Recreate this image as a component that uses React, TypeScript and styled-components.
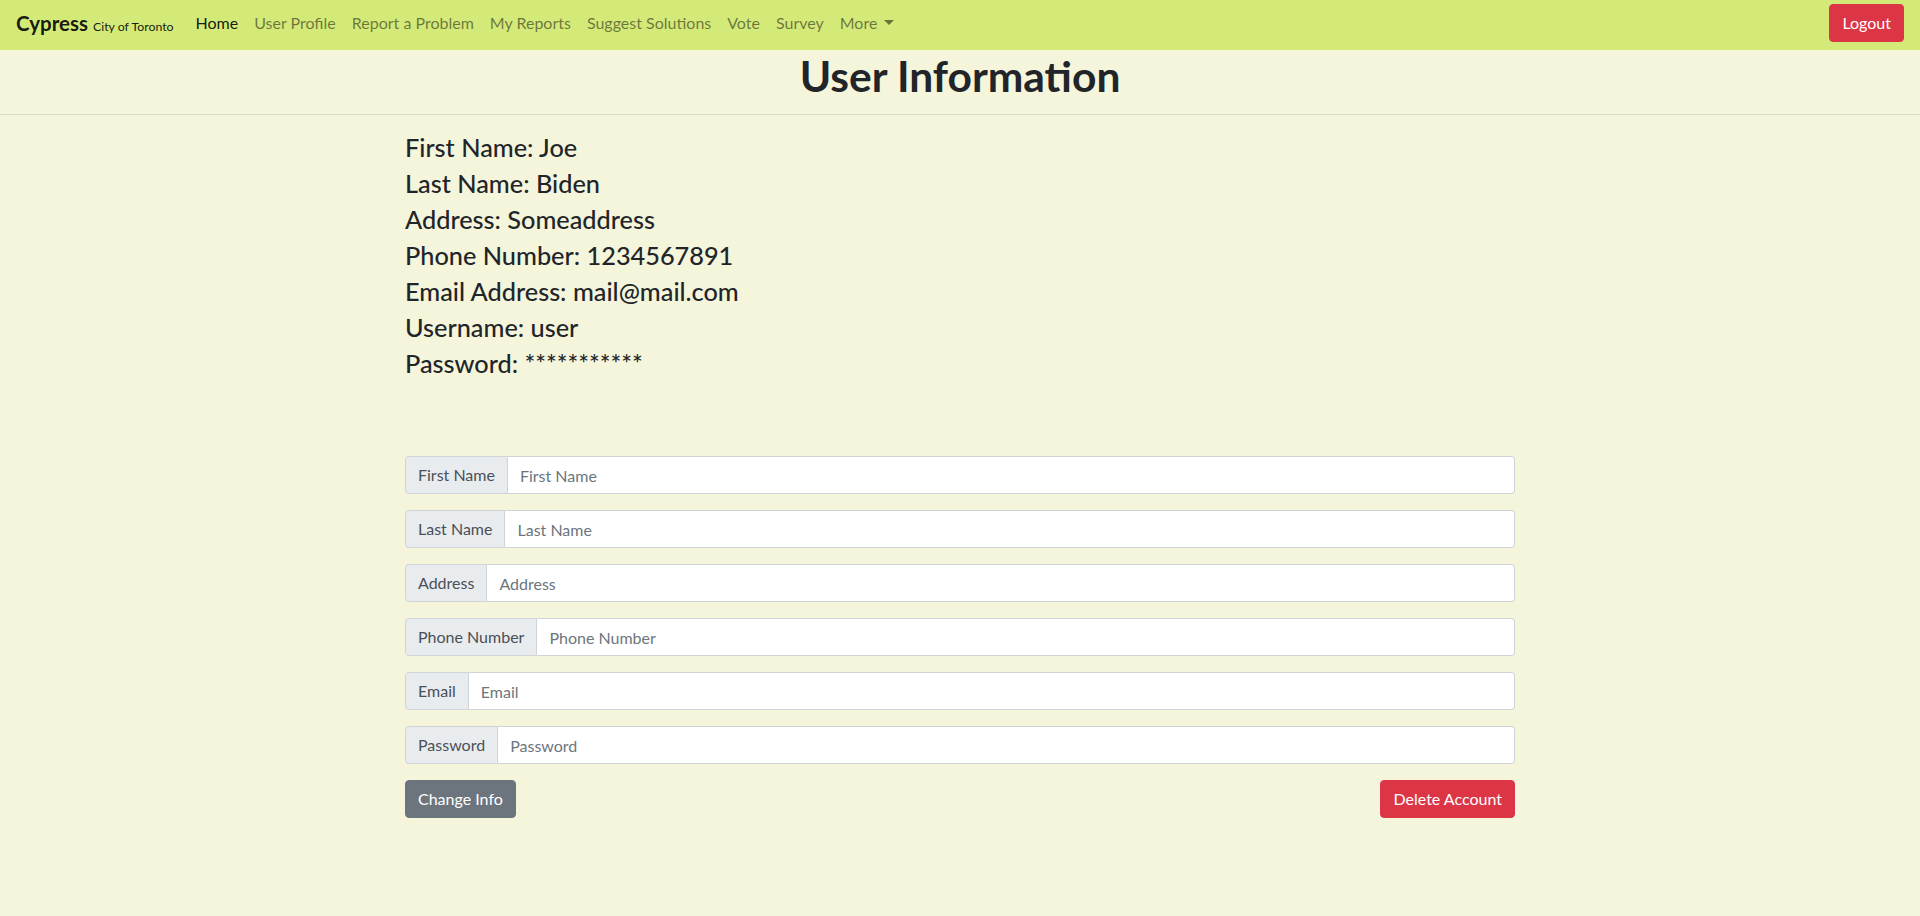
import React from "react";
import styled, { createGlobalStyle } from "styled-components";

const GlobalStyle = createGlobalStyle`
  html, body { margin: 0; padding: 0; }
  body {
    background: #f5f5dc;
    font-family: Lato, "Open Sans", "Liberation Sans", sans-serif;
    color: #212529;
    font-size: 16px;
    line-height: 1.5;
  }
  * { box-sizing: border-box; }
`;

const Navbar = styled.nav`
  height: 50px;
  background: #d4ea78;
  display: flex;
  align-items: center;
  padding: 0 16px 4px 16px;
`;

const Brand = styled.a`
  display: flex;
  align-items: baseline;
  gap: 5px;
  margin-right: 14px;
  color: rgba(0, 0, 0, 0.9);
  text-decoration: none;
  font-size: 20.5px;
  font-weight: 700;
  white-space: nowrap;
`;

const BrandSub = styled.small`
  font-size: 12.3px;
  font-weight: 400;
`;

const NavList = styled.ul`
  display: flex;
  list-style: none;
  margin: 0;
  padding: 0;
`;

const NavLink = styled.a<{ $active?: boolean }>`
  display: flex;
  align-items: center;
  padding: 8px 8px;
  font-size: 16px;
  color: ${(p) => (p.$active ? "rgba(0,0,0,0.9)" : "rgba(0,0,0,0.5)")};
  text-decoration: none;
  white-space: nowrap;
`;

const Caret = styled.span`
  display: inline-block;
  margin-left: 7px;
  border-top: 5px solid currentColor;
  border-left: 5px solid transparent;
  border-right: 5px solid transparent;
  transform: translateY(-1px);
`;

const Spacer = styled.div`
  flex: 1;
`;

const Button = styled.button<{ $variant: "danger" | "secondary" }>`
  height: 38px;
  padding: 6px 12px;
  font-family: inherit;
  font-size: 16px;
  line-height: 24px;
  color: #fff;
  border: 1px solid ${(p) => (p.$variant === "danger" ? "#dc3545" : "#6c757d")};
  background: ${(p) => (p.$variant === "danger" ? "#dc3545" : "#6c757d")};
  border-radius: 4px;
  cursor: pointer;
`;

const Header = styled.header`
  padding-top: 2px;
  text-align: center;
`;

const Title = styled.h1`
  margin: 0;
  font-size: 42.5px;
  font-weight: 700;
  line-height: 48px;
  color: #212529;
`;

const Divider = styled.hr`
  margin: 14px 0 0 0;
  border: 0;
  border-top: 1px solid rgba(0, 0, 0, 0.1);
`;

const Container = styled.main`
  width: 1110px;
  margin: 0 auto;
  padding-top: 17px;
`;

const InfoList = styled.div`
  display: flex;
  flex-direction: column;
  gap: 6px;
  margin-bottom: 78px;
`;

const InfoLine = styled.h4`
  margin: 0;
  font-size: 25.3px;
  font-weight: 500;
  line-height: 30px;
  color: #212529;
`;

const Form = styled.form`
  display: flex;
  flex-direction: column;
  gap: 16px;
`;

const InputGroup = styled.div`
  display: flex;
  height: 38px;
`;

const GroupLabel = styled.span`
  display: flex;
  align-items: center;
  padding: 6px 12px;
  background: #e9ecef;
  border: 1px solid #ced4da;
  border-radius: 4px 0 0 4px;
  color: #495057;
  font-size: 16px;
  white-space: nowrap;
`;

const Input = styled.input`
  flex: 1;
  padding: 6px 12px;
  border: 1px solid #ced4da;
  border-left: 0;
  border-radius: 0 4px 4px 0;
  background: #fff;
  font-family: inherit;
  font-size: 16px;
  color: #495057;
  outline: none;
  &::placeholder { color: #6c757d; }
`;

const Actions = styled.div`
  display: flex;
  justify-content: space-between;
`;

const links = [
  "Home",
  "User Profile",
  "Report a Problem",
  "My Reports",
  "Suggest Solutions",
  "Vote",
  "Survey",
];

const info = [
  "First Name: Joe",
  "Last Name: Biden",
  "Address: Someaddress",
  "Phone Number: 1234567891",
  "Email Address: mail@mail.com",
  "Username: user",
  "Password: ***********",
];

const fields = [
  "First Name",
  "Last Name",
  "Address",
  "Phone Number",
  "Email",
  "Password",
];

export default function App() {
  return (
    <>
      <GlobalStyle />
      <Navbar>
        <Brand href="#">
          Cypress <BrandSub>City of Toronto</BrandSub>
        </Brand>
        <NavList>
          {links.map((l, i) => (
            <li key={l}>
              <NavLink href="#" $active={i === 0}>
                {l}
              </NavLink>
            </li>
          ))}
          <li>
            <NavLink href="#">
              More
              <Caret />
            </NavLink>
          </li>
        </NavList>
        <Spacer />
        <Button $variant="danger">Logout</Button>
      </Navbar>
      <Header>
        <Title>User Information</Title>
      </Header>
      <Divider />
      <Container>
        <InfoList>
          {info.map((t) => (
            <InfoLine key={t}>{t}</InfoLine>
          ))}
        </InfoList>
        <Form onSubmit={(e) => e.preventDefault()}>
          {fields.map((f) => (
            <InputGroup key={f}>
              <GroupLabel>{f}</GroupLabel>
              <Input
                type={f === "Password" ? "password" : "text"}
                placeholder={f}
              />
            </InputGroup>
          ))}
          <Actions>
            <Button type="button" $variant="secondary">
              Change Info
            </Button>
            <Button type="button" $variant="danger">
              Delete Account
            </Button>
          </Actions>
        </Form>
      </Container>
    </>
  );
}
